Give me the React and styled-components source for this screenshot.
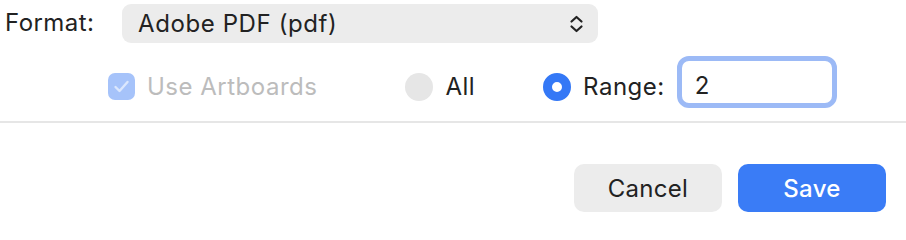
import React from "react";
import styled, { createGlobalStyle } from "styled-components";

const Global = createGlobalStyle`
  html, body {
    margin: 0;
    padding: 0;
    background: #fff;
  }
  body {
    font-family: Inter, "Liberation Sans", sans-serif;
    color: #222;
  }
`;

const Dialog = styled.div`
  width: 906px;
  height: 240px;
  display: flex;
  flex-direction: column;
  padding-top: 4px;
  box-sizing: border-box;
`;

const FormatRow = styled.div`
  display: flex;
  align-items: center;
  height: 39px;
  padding-left: 5px;
`;

const Label = styled.span`
  font-size: 24px;
  letter-spacing: 0.45px;
  color: #222;
  width: 117px;
  margin-top: -3px;
`;

const Select = styled.div`
  width: 476px;
  height: 39px;
  box-sizing: border-box;
  border-radius: 9px;
  background: #ececec;
  display: flex;
  align-items: center;
  justify-content: space-between;
  padding: 0 14px 0 16px;
  font-size: 24px;
  letter-spacing: 0.6px;
  color: #222;
`;

const OptionsRow = styled.div`
  display: flex;
  align-items: center;
  height: 52px;
  margin-top: 13px;
  padding-left: 108px;
`;

const Option = styled.label`
  display: flex;
  align-items: center;
  gap: 12px;
  margin-right: ${(p) => p.$gap || 0}px;
  font-size: 24px;
  letter-spacing: 0.5px;
  color: ${(p) => (p.$disabled ? "#bcbcbc" : "#222")};
  margin-top: 9px;
`;

const CheckBox = styled.span`
  width: 27px;
  height: 27px;
  border-radius: 7px;
  background: #a6c3fa;
  display: flex;
  align-items: center;
  justify-content: center;
`;

const Radio = styled.span`
  width: 28px;
  height: 28px;
  border-radius: 50%;
  box-sizing: border-box;
  background: ${(p) => (p.$checked ? "#fff" : "#e6e6e6")};
  border: ${(p) => (p.$checked ? "9px solid #3478f6" : "none")};
`;

const RangeField = styled.div`
  width: 160px;
  height: 52px;
  box-sizing: border-box;
  border: 5px solid #9cbaf6;
  border-radius: 12px;
  margin-left: 12px;
  display: flex;
  align-items: center;
  padding: 6px 0 0 13px;
  font-size: 24px;
  color: #222;
`;

const Divider = styled.div`
  height: 2px;
  background: #e6e6e6;
  margin-top: 13px;
`;

const Footer = styled.div`
  display: flex;
  justify-content: flex-end;
  gap: 16px;
  padding: 41px 20px 0 0;
`;

const Button = styled.button`
  width: 148px;
  height: 48px;
  border: none;
  border-radius: 10px;
  font-family: inherit;
  font-size: 24px;
  letter-spacing: 0.3px;
  font-weight: ${(p) => (p.$primary ? 500 : 400)};
  background: ${(p) => (p.$primary ? "#3a7cf6" : "#ececec")};
  color: ${(p) => (p.$primary ? "#fff" : "#222")};
`;

const Chevrons = () => (
  <svg width="15" height="18" viewBox="0 0 15 18" fill="none">
    <path
      d="M2.5 6.5 L7.5 2 L12.5 6.5 M2.5 11.5 L7.5 16 L12.5 11.5"
      stroke="#222"
      strokeWidth="2.2"
      strokeLinecap="round"
      strokeLinejoin="round"
    />
  </svg>
);

const Check = () => (
  <svg width="17" height="15" viewBox="0 0 17 15" fill="none">
    <path
      d="M2.5 8 L6.5 12 L14.5 3"
      stroke="#dbe7fd"
      strokeWidth="2.4"
      strokeLinecap="round"
      strokeLinejoin="round"
    />
  </svg>
);

export default function App() {
  return (
    <>
      <Global />
      <Dialog>
        <FormatRow>
          <Label>Format:</Label>
          <Select>
            <span>Adobe PDF (pdf)</span>
            <Chevrons />
          </Select>
        </FormatRow>
        <OptionsRow>
          <Option $disabled $gap={88}>
            <CheckBox>
              <Check />
            </CheckBox>
            Use Artboards
          </Option>
          <Option $gap={68}>
            <Radio />
            All
          </Option>
          <Option>
            <Radio $checked />
            Range:
          </Option>
          <RangeField>2</RangeField>
        </OptionsRow>
        <Divider />
        <Footer>
          <Button>Cancel</Button>
          <Button $primary>Save</Button>
        </Footer>
      </Dialog>
    </>
  );
}
